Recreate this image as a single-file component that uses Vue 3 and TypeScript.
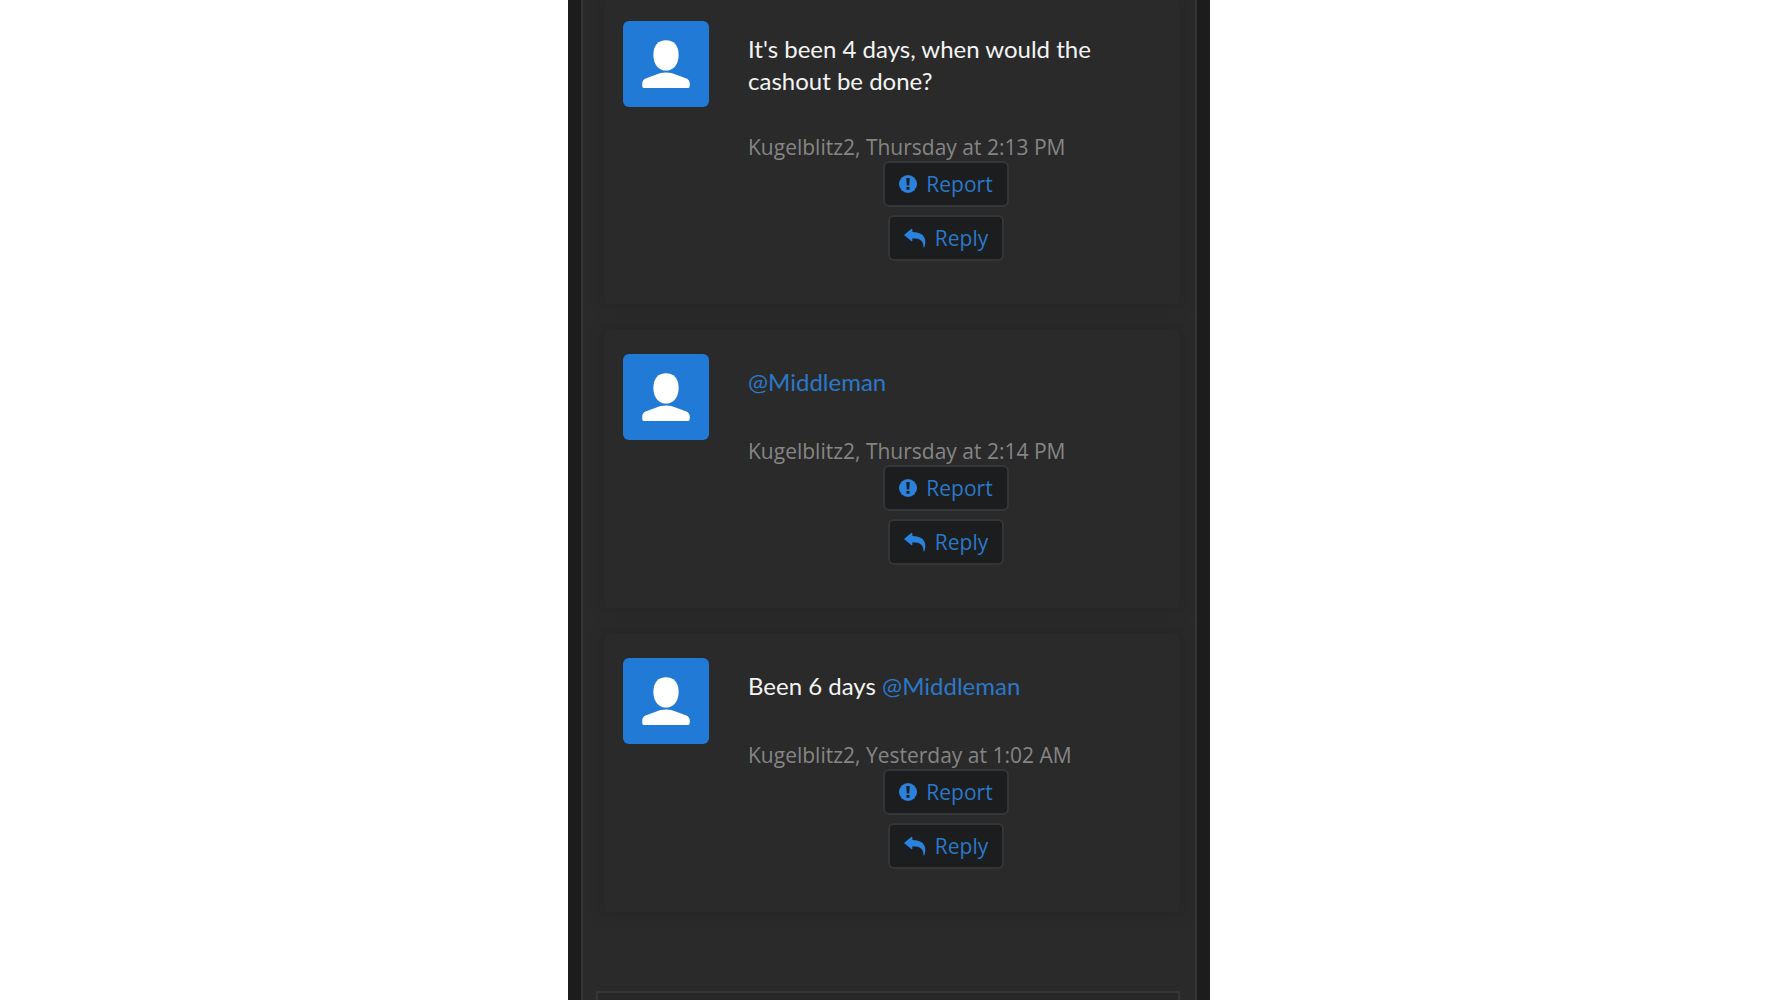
<script setup lang="ts">
interface Comment {
  id: number
  text: string
  mention: string
  author: string
  time: string
}

const comments: Comment[] = [
  { id: 1, text: "It's been 4 days, when would the cashout be done?", mention: '', author: 'Kugelblitz2', time: 'Thursday at 2:13 PM' },
  { id: 2, text: '', mention: '@Middleman', author: 'Kugelblitz2', time: 'Thursday at 2:14 PM' },
  { id: 3, text: 'Been 6 days ', mention: '@Middleman', author: 'Kugelblitz2', time: 'Yesterday at 1:02 AM' },
]
</script>

<template>
  <div class="viewport">
    <div class="phone">
      <main class="panel">
        <article v-for="c in comments" :key="c.id" class="card">
          <svg class="avatar" viewBox="0 0 85 85" aria-hidden="true">
            <rect width="85" height="85" rx="6" fill="#207ad6" />
            <path d="M42.5 19c7.500 0 12.500 5 12.500 14.500S49.500 49 42.500 49 30 43 30 33.500 35 19 42.500 19z" fill="#fff" />
            <path d="M19 62c0-3 1.500-4.500 4-5.500l10-3.500c3-1.200 5-2 9.500-2s6.500.8 9.500 2l10 3.500c2.500 1 4 2.500 4 5.500v2c0 1.500-.8 2.300-2.300 2.300H21.300c-1.500 0-2.300-.8-2.300-2.300z" fill="#fff" />
          </svg>
          <div class="body">
            <p class="message">{{ c.text }}<a v-if="c.mention" href="#">{{ c.mention }}</a></p>
            <p class="meta">{{ c.author }}, {{ c.time }}</p>
            <div class="actions">
              <button type="button">
                <svg class="icon-report" viewBox="0 0 18 18" aria-hidden="true">
                  <circle cx="9" cy="9" r="9" fill="#2b82dc" />
                  <path d="M7.300 3h3.400l-.5 7.500H7.800z" fill="#1b1d1f" />
                  <rect x="7.500" y="12" width="3" height="2.800" rx=".5" fill="#1b1d1f" />
                </svg>
                <span>Report</span>
              </button>
              <button type="button">
                <svg class="icon-reply" viewBox="0 0 22 20" aria-hidden="true">
                  <path d="M0 7 7.200 1c.6-.5 1.200-.2 1.200.6v2.500C16.500 4.300 21.300 7.500 21.300 14c0 2-.3 3.800-.9 5.200-.3.600-.9.400-.9-.2.200-5.700-3-8.700-11.100-8.800v2.300c0 .8-.6 1.100-1.200.6z" fill="#2b82dc" />
                </svg>
                <span>Reply</span>
              </button>
            </div>
          </div>
        </article>
        <textarea class="editor" aria-label="Write a comment"></textarea>
      </main>
    </div>
  </div>
</template>

<style>
body {
  margin: 0;
  background: #fff;
}
</style>

<style scoped>
.viewport {
  height: 100vh;
  overflow: hidden;
}

.phone {
  box-sizing: border-box;
  max-width: 642px;
  min-height: 100%;
  margin: 0 auto;
  padding: 0 13px;
  background: #1c1c1c;
}

.panel {
  box-sizing: border-box;
  padding: 0 15px 0 13px;
  border: solid #343434;
  border-width: 0 2px;
  background: #2a2a2a;
  font-family: "Open Sans", "Noto Sans", sans-serif;
}

.card {
  display: flex;
  align-items: flex-start;
  gap: 39px;
  margin: 0 0 26px 8px;
  padding: 24px 36px 43px 19px;
  border-radius: 4px;
  background: #2a2a2a;
  box-shadow: 0 0 18px rgba(0, 0, 0, 0.18);
}

.card:first-child {
  padding-top: 21px;
}

.avatar {
  flex: none;
  width: 86px;
  height: 86px;
}

.body {
  flex: 1;
  min-width: 0;
  padding-top: 12px;
}

.message {
  min-height: 35px;
  margin: 0 0 36px;
  color: #f4f4f4;
  font-family: Lato, "Open Sans", sans-serif;
  font-size: 24px;
  line-height: 32px;
}

.message a {
  color: #2a78c8;
  text-decoration: none;
}

.meta {
  margin: 0;
  color: #858585;
  font-size: 21px;
  line-height: 28px;
}

.actions {
  display: flex;
  flex-direction: column;
  align-items: center;
  gap: 8px;
}

button {
  display: flex;
  align-items: center;
  gap: 9px;
  box-sizing: border-box;
  height: 46px;
  padding: 0 14px;
  border: 2px solid #343536;
  border-radius: 6px;
  background: #1b1d1f;
  color: #2a78c8;
  font-family: inherit;
  font-size: 21px;
  line-height: 28px;
}

.icon-report {
  width: 18px;
  height: 18px;
}

.icon-reply {
  width: 22px;
  height: 20px;
}

.editor {
  display: block;
  box-sizing: border-box;
  width: 100%;
  height: 160px;
  margin-top: 79px;
  border: 2px solid #363636;
  background: #282828;
  color: #f4f4f4;
  font-family: inherit;
  font-size: 21px;
  resize: none;
}
</style>
